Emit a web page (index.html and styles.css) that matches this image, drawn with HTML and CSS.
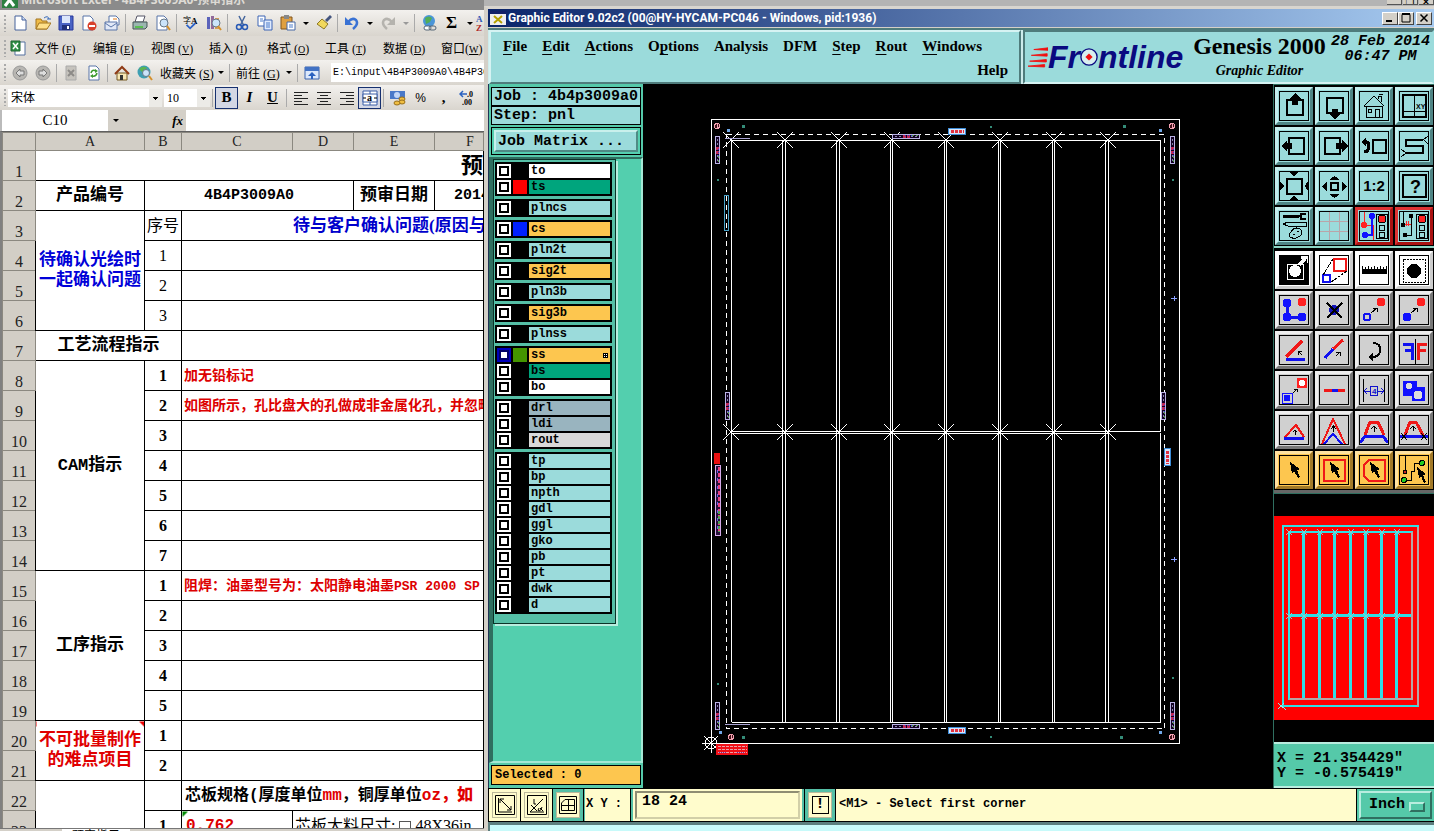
FILE: index.html
```html
<!DOCTYPE html>
<html lang="zh">
<head>
<meta charset="utf-8">
<title>Graphic Editor</title>
<link rel="stylesheet" href="styles.css">
</head>
<body>
<div class="desktop">
<section class="excel">
  <header class="excel-title"><svg class="xl" viewBox="0 0 16 16"><path d="M0 0H16V16H0Z" fill="#2c8040"/><path d="M3 2L12 14M12 2L3 14" stroke="#fff" stroke-width="3"/></svg><span>Microsoft Excel - 4B4P3009A0-预审指示</span></header>
  <div class="bar bar-std"><i class="grip"></i>
    <button class="tb" aria-label="New"><svg viewBox="0 0 16 16"><path d="M3 1H10L14 5V15H3Z" fill="#fff" stroke="#47639b"/><path d="M10 1V5H14" fill="#cfdcf5" stroke="#47639b"/></svg></button>
    <button class="tb" aria-label="Open"><svg viewBox="0 0 16 16"><path d="M1 14V4H6L7 6H12V14Z" fill="#f0bc48" stroke="#a27521"/><path d="M1 14L4 8H16L12 14Z" fill="#ffe08a" stroke="#a27521"/><path d="M9 3Q13 0 14 4M12 4H16" fill="none" stroke="#3568b8"/></svg></button>
    <button class="tb" aria-label="Save"><svg viewBox="0 0 16 16"><path d="M1 1H15V15H1Z" fill="#4a63c4" stroke="#27379b"/><path d="M4 1H12V8H4Z" fill="#dce6fb"/><path d="M4 10H12V15H4Z" fill="#20307a"/><path d="M9 11H11V14H9Z" fill="#fff"/></svg></button>
    <button class="tb" aria-label="Permission"><svg viewBox="0 0 16 16"><path d="M2 1H9L12 4V15H2Z" fill="#fff" stroke="#5874a8"/><circle cx="11" cy="11" r="4.500" fill="#d8402a"/><path d="M8 11H14" stroke="#fff" stroke-width="2"/></svg></button>
    <button class="tb" aria-label="Mail"><svg viewBox="0 0 16 16"><path d="M5 1H12L15 4V10H5Z" fill="#fff" stroke="#5874a8"/><path d="M1 7H13V15H1Z" fill="#e2e9f7" stroke="#5874a8"/><path d="M1 8L7 12L13 8" fill="none" stroke="#5874a8"/><path d="M9 4H13" stroke="#e07818"/></svg></button>
    <i class="sep"></i>
    <button class="tb" aria-label="Print"><svg viewBox="0 0 16 16"><path d="M5 1H13L11 7H3Z" fill="#fff" stroke="#556"/><path d="M1 7H15V12L13 14H1Z" fill="#9bb6b0" stroke="#455"/><path d="M3 11H11V13H3Z" fill="#5abf50"/></svg></button>
    <button class="tb" aria-label="Preview"><svg viewBox="0 0 16 16"><path d="M2 1H9L12 4V15H2Z" fill="#fff" stroke="#5874a8"/><circle cx="9" cy="8" r="4" fill="#cbe4fa" stroke="#678"/><path d="M12 11L15 15" stroke="#d4902c" stroke-width="2"/></svg></button>
    <i class="sep"></i>
    <button class="tb" aria-label="Spelling"><svg viewBox="0 0 18 16"><text x="0" y="8" font-size="9" class="han">字</text><text x="9" y="9" font-size="10" class="sr">A</text><path d="M4 10L8 14L14 8" fill="none" stroke="#2d62c8" stroke-width="2"/></svg></button>
    <button class="tb" aria-label="Research"><svg viewBox="0 0 16 16"><path d="M1 2H4V14H1Z" fill="#5b63bb"/><path d="M5 1H8V14H5Z" fill="#92699b"/><path d="M9 3H13V14H9Z" fill="#d8a054"/><circle cx="10" cy="8" r="4" fill="#cbe4fa" stroke="#678"/><path d="M12 11L15 15" stroke="#d4902c" stroke-width="2"/></svg></button>
    <i class="sep"></i>
    <button class="tb" aria-label="Cut"><svg viewBox="0 0 16 16"><path d="M5 1L10 11M11 1L6 11" stroke="#45669d" stroke-width="1.500"/><circle cx="5" cy="12" r="2.500" fill="none" stroke="#2759b5" stroke-width="1.500"/><circle cx="11" cy="12" r="2.500" fill="none" stroke="#2759b5" stroke-width="1.500"/></svg></button>
    <button class="tb" aria-label="Copy"><svg viewBox="0 0 16 16"><path d="M1 1H8V11H1Z" fill="#fff" stroke="#3c64b4"/><path d="M7 5H15V15H7Z" fill="#dfeafd" stroke="#3c64b4"/><path d="M9 8H13M9 10H13M9 12H13M3 4H6M3 6H6" stroke="#4c7ccb"/></svg></button>
    <button class="tb" aria-label="Paste"><svg viewBox="0 0 16 16"><path d="M1 2H12V14H1Z" fill="#e0a040" stroke="#80551d"/><path d="M4 0H9V4H4Z" fill="#888"/><path d="M7 7H15V15H7Z" fill="#fff" stroke="#4668a6"/><path d="M9 10H13M9 12H13" stroke="#4c7ccb"/></svg></button>
    <button class="drop" aria-label="Paste options"></button>
    <button class="tb" aria-label="Format painter"><svg viewBox="0 0 16 16"><path d="M9 5L14 0L16 2L11 7Z" fill="#44557f"/><path d="M6 4L12 9L8 14L1 9Z" fill="#f1d85c" stroke="#8d7825"/></svg></button>
    <i class="sep"></i>
    <button class="tb" aria-label="Undo"><svg viewBox="0 0 16 16"><path d="M4 7Q8 2 12 5Q15 9 9 14" fill="none" stroke="#3972d4" stroke-width="2.500"/><path d="M1 2V10H9Z" fill="#3972d4"/></svg></button>
    <button class="drop" aria-label="Undo list"></button>
    <button class="tb" aria-label="Redo"><svg viewBox="0 0 16 16"><path d="M12 7Q8 2 4 5Q1 9 7 14" fill="none" stroke="#b5b3ae" stroke-width="2.500"/><path d="M15 2V10H7Z" fill="#b5b3ae"/></svg></button>
    <button class="drop dim" aria-label="Redo list"></button>
    <i class="sep"></i>
    <button class="tb" aria-label="Hyperlink"><svg viewBox="0 0 16 16"><circle cx="8" cy="6" r="6" fill="#4a95d8"/><path d="M4 3Q8 0 11 3L9 7L5 9Z" fill="#53ad57"/><rect x="3" y="11" width="7" height="4" rx="2" fill="#fff" stroke="#567"/><rect x="8" y="11" width="7" height="4" rx="2" fill="none" stroke="#567"/></svg></button>
    <button class="tb sigma">Σ</button><button class="drop" aria-label="Sum options"></button>
    <button class="tb az" aria-label="Sort"><svg viewBox="0 0 16 16"><text x="0" y="7" font-size="9" class="sr" fill="#3159b5">A</text><text x="0" y="16" font-size="9" class="sr" fill="#b02a2a">Z</text></svg></button>
  </div>
  <nav class="bar bar-menu"><i class="grip"></i><svg class="xl" viewBox="0 0 16 16"><path d="M5 2H15V15H5Z" fill="#fff" stroke="#55709f"/><path d="M1 1H10V11H1Z" fill="#319048" stroke="#1e6430"/><path d="M3 3L8 9M8 3L3 9" stroke="#fff" stroke-width="1.500"/></svg>
    <button>文件 (<u>F</u>)</button><button>编辑 (<u>E</u>)</button><button>视图 (<u>V</u>)</button><button>插入 (<u>I</u>)</button><button>格式 (<u>O</u>)</button><button>工具 (<u>T</u>)</button><button>数据 (<u>D</u>)</button><button class="last">窗口(<u>W</u>)</button>
  </nav>
  <div class="bar bar-web"><i class="grip"></i>
    <button class="tb" aria-label="Back"><svg viewBox="0 0 16 16"><circle cx="8" cy="8" r="7" fill="#b8b6b2" stroke="#999"/><path d="M8 4L4 8L8 12V10H12V6H8Z" fill="#ddd" stroke="#777"/></svg></button>
    <button class="tb" aria-label="Forward"><svg viewBox="0 0 16 16"><circle cx="8" cy="8" r="7" fill="#b8b6b2" stroke="#999"/><path d="M8 4L12 8L8 12V10H4V6H8Z" fill="#ddd" stroke="#777"/></svg></button>
    <i class="sep"></i>
    <button class="tb" aria-label="Stop"><svg viewBox="0 0 16 16"><path d="M3 1H13V15H3Z" fill="#c6c3bd" stroke="#aaa"/><path d="M5 5L11 11M11 5L5 11" stroke="#8d8b88" stroke-width="2"/></svg></button>
    <button class="tb" aria-label="Refresh"><svg viewBox="0 0 16 16"><path d="M3 1H10L13 4V15H3Z" fill="#fff" stroke="#5874a8"/><path d="M5 8Q6 4 10 6M11 8Q10 12 6 11" fill="none" stroke="#3c9a2c" stroke-width="1.500"/><path d="M9 4L12 6L9 8ZM7 9L4 11L7 13Z" fill="#3c9a2c"/></svg></button>
    <i class="sep"></i>
    <button class="tb" aria-label="Home"><svg viewBox="0 0 16 16"><path d="M3 8H13V15H3Z" fill="#f7e6b4" stroke="#775a25"/><path d="M1 9L8 2L15 9" fill="none" stroke="#8f3b16" stroke-width="2"/><path d="M6 10H9V15H6Z" fill="#333"/></svg></button>
    <button class="tb" aria-label="Search web"><svg viewBox="0 0 16 16"><circle cx="7" cy="7" r="6.500" fill="#3f9fb3"/><path d="M2 4Q6 0 10 3L6 8Z" fill="#5bb451"/><circle cx="9" cy="8" r="3.500" fill="#cbe4fa" stroke="#678"/><path d="M12 11L15 15" stroke="#d4902c" stroke-width="2"/></svg></button>
    <button class="word">收藏夹 (<u>S</u>)</button><button class="drop" aria-label="Favourites"></button><i class="sep"></i>
    <button class="word go">前往 (<u>G</u>)</button><button class="drop" aria-label="Go list"></button><i class="sep"></i>
    <button class="tb" aria-label="Show web toolbar"><svg viewBox="0 0 16 16"><path d="M1 2H15V14H1Z" fill="#dce8fb" stroke="#3a62ac"/><path d="M1 2H15V6H1Z" fill="#4272c4"/><path d="M8 7L12 11H9V14H7V11H4Z" fill="#2b62c0"/></svg></button>
    <input class="address" aria-label="Address" value="E:\input\4B4P3009A0\4B4P3009A0">
  </div>
  <div class="bar bar-format"><i class="grip"></i>
    <select class="font-name" aria-label="Font"><option>宋体</option></select>
    <select class="font-size" aria-label="Size"><option>10</option></select>
    <i class="sep"></i>
    <button class="tb letter pressed">B</button><button class="tb letter italic">I</button><button class="tb letter under">U</button><i class="sep"></i>
    <button class="tb" aria-label="Left"><svg viewBox="0 0 16 16"><path d="M1 2.500H15M1 5.500H9M1 8.500H15M1 11.500H9M1 14.500H15" stroke="#222"/></svg></button>
    <button class="tb" aria-label="Centre"><svg viewBox="0 0 16 16"><path d="M1 2.500H15M4 5.500H12M1 8.500H15M4 11.500H12M1 14.500H15" stroke="#222"/></svg></button>
    <button class="tb" aria-label="Right"><svg viewBox="0 0 16 16"><path d="M1 2.500H15M7 5.500H15M1 8.500H15M7 11.500H15M1 14.500H15" stroke="#222"/></svg></button>
    <button class="tb pressed" aria-label="Merge"><svg viewBox="0 0 16 16"><path d="M1 1H15V15H1ZM8 1V4M8 12V15" fill="#fff" stroke="#3a5fa8"/><path d="M1 4H15V12H1Z" fill="#fff" stroke="#3a5fa8"/><text x="5" y="11" font-size="10" class="sr">a</text><path d="M1 8H4M12 8H15" stroke="#000"/></svg></button>
    <i class="sep"></i>
    <button class="tb" aria-label="Currency"><svg viewBox="0 0 16 16"><path d="M0 1H15V9H0Z" fill="#4a79c8"/><circle cx="7" cy="5" r="3" fill="#c2d6f7"/><ellipse cx="12" cy="9" rx="3" ry="2" fill="#f0be42" stroke="#99701c"/><ellipse cx="12" cy="12" rx="3" ry="2" fill="#f0be42" stroke="#99701c"/><ellipse cx="7" cy="13" rx="3" ry="2" fill="#f0be42" stroke="#99701c"/></svg></button>
    <button class="tb pct">%</button><button class="tb letter">,</button>
    <button class="tb" aria-label="Increase decimal"><svg viewBox="0 0 16 16"><path d="M1 4H8M4 1L1 4L4 7" fill="none" stroke="#2b62c0" stroke-width="1.500"/><text x="8" y="7" font-size="8" class="sr">.0</text><text x="3" y="15" font-size="8" class="sr">.00</text></svg></button>
  </div>
  <div class="formula"><input class="name-box" aria-label="Name box" value="C10"><button class="drop" aria-label="Names"></button><button class="fx">fx</button><input class="fx-text" aria-label="Formula"></div>
  <div class="sheet"><table>
    <colgroup><col class="c-head"><col class="c-a"><col class="c-b"><col class="c-c"><col class="c-d"><col class="c-e"><col></colgroup>
    <thead><tr><th></th><th>A</th><th>B</th><th>C</th><th>D</th><th>E</th><th><span class="f-col">F</span></th></tr></thead>
    <tbody>
    <tr><th>1</th><td colspan="6" class="heading">预</td></tr>
    <tr><th>2</th><td class="cap">产品编号</td><td colspan="3" class="code">4B4P3009A0</td><td class="cap">预审日期</td><td class="code cut">2014</td></tr>
    <tr><th>3</th><td rowspan="4" class="cap blue">待确认光绘时<br>一起确认问题</td><td>序号</td><td colspan="4" class="ask">待与客户确认问题(原因与</td></tr>
    <tr><th>4</th><td>1</td><td colspan="4"></td></tr>
    <tr><th>5</th><td>2</td><td colspan="4"></td></tr>
    <tr><th>6</th><td>3</td><td colspan="4"></td></tr>
    <tr><th>7</th><td colspan="2" class="cap">工艺流程指示</td><td colspan="4"></td></tr>
    <tr><th>8</th><td rowspan="7" class="cap">CAM指示</td><td class="n">1</td><td colspan="4" class="note">加无铅标记</td></tr>
    <tr><th>9</th><td class="n">2</td><td colspan="4" class="note">如图所示，孔比盘大的孔做成非金属化孔，并忽略</td></tr>
    <tr><th>10</th><td class="n">3</td><td colspan="4"></td></tr>
    <tr><th>11</th><td class="n">4</td><td colspan="4"></td></tr>
    <tr><th>12</th><td class="n">5</td><td colspan="4"></td></tr>
    <tr><th>13</th><td class="n">6</td><td colspan="4"></td></tr>
    <tr><th>14</th><td class="n">7</td><td colspan="4"></td></tr>
    <tr><th>15</th><td rowspan="5" class="cap">工序指示</td><td class="n">1</td><td colspan="4" class="note">阻焊：油墨型号为：太阳静电油墨<span class="mono">PSR 2000 SP</span></td></tr>
    <tr><th>16</th><td class="n">2</td><td colspan="4"></td></tr>
    <tr><th>17</th><td class="n">3</td><td colspan="4"></td></tr>
    <tr><th>18</th><td class="n">4</td><td colspan="4"></td></tr>
    <tr><th>19</th><td class="n">5</td><td colspan="4"></td></tr>
    <tr><th>20</th><td rowspan="2" class="cap red comment">不可批量制作<br>的难点项目</td><td class="n">1</td><td colspan="4"></td></tr>
    <tr><th>21</th><td class="n">2</td><td colspan="4"></td></tr>
    <tr><th>22</th><td rowspan="2"></td><td></td><td colspan="4" class="core">芯板规格(厚度单位<b class="red">mm</b>，铜厚单位<b class="red">oz，如</b></td></tr>
    <tr><th>23</th><td class="n">1</td><td class="value">0.762</td><td colspan="3" class="size"><label>芯板大料尺寸: <input type="checkbox"> 48X36in</label></td></tr>
    </tbody></table></div>
  <div class="tabs"><i></i><button>预审指示</button></div>
</section>

<div class="back-title"><button>_</button><button>❐</button><button>×</button></div>

<section class="editor">
  <header class="title"><svg class="app" viewBox="0 0 16 14"><path d="M0 0H16V14H0Z" fill="#eee"/><path d="M0 0H16V3H0Z" fill="#112068"/><path d="M4 5L12 12M12 5L4 12" stroke="#b4a000" stroke-width="2"/></svg><h1>Graphic Editor 9.02c2 (00@HY-HYCAM-PC046 - Windows, pid:1936)</h1>
    <button aria-label="Minimise"><svg viewBox="0 0 12 10"><path d="M2 8H8" stroke="#000" stroke-width="2"/></svg></button><button aria-label="Maximise"><svg viewBox="0 0 12 10"><path d="M2 1.500H10V9H2Z" fill="none" stroke="#000"/><path d="M2 1H10" stroke="#000" stroke-width="2"/></svg></button><button class="close" aria-label="Close"><svg viewBox="0 0 12 10"><path d="M2.500 1.500L9.500 8.500M9.500 1.500L2.500 8.500" stroke="#000" stroke-width="1.500"/></svg></button></header>
  <div class="top">
    <nav class="menu"><div><button><u>F</u>ile</button><button><u>E</u>dit</button><button><u>A</u>ctions</button><button>O<u>p</u>tions</button><button>Analysis</button><button>DFM</button><button><u>S</u>tep</button><button><u>R</u>out</button><button><u>W</u>indows</button></div><div class="help"><button>Help</button></div></nav>
    <div class="brand">
      <div class="logo"><svg viewBox="0 0 24 26"><path d="M24 2L7 4L24 5ZM23 9L4 11L23 12ZM22 16L2 18L22 19ZM20 22L0 24L20 25Z" fill="#f01010" stroke="#f01010"/></svg><span>Fr</span><svg class="target" viewBox="0 0 20 20"><circle cx="10" cy="10" r="9" fill="#d8efef" stroke="#0a0a80" stroke-width="1.500"/><path d="M10 6L14 10L10 14L6 10Z" fill="#f01010"/></svg><span>ntline</span></div>
      <div class="product"><strong>Genesis 2000</strong><em>Graphic Editor</em></div>
      <div class="clock"><span>28 Feb 2014</span><span>06:47 PM</span></div>
    </div>
  </div>
  <div class="main">
    <aside class="left">
      <div class="job">Job : 4b4p3009a0</div><div class="job">Step: pnl</div>
      <div class="matrix"><button>Job Matrix ...</button></div>
      <div class="well"><div class="layers">
        <ul><li><input type="checkbox" id="l1"><i></i><label for="l1" class="white">to</label></li><li><input type="checkbox" id="l2"><i class="s-red"></i><label for="l2" class="green">ts</label></li></ul>
        <ul><li><input type="checkbox" id="l3"><i></i><label for="l3">plncs</label></li></ul>
        <ul><li><input type="checkbox" id="l4"><i class="s-blue"></i><label for="l4" class="gold">cs</label></li></ul>
        <ul><li><input type="checkbox" id="l5"><i></i><label for="l5">pln2t</label></li></ul>
        <ul><li><input type="checkbox" id="l6"><i></i><label for="l6" class="gold">sig2t</label></li></ul>
        <ul><li><input type="checkbox" id="l7"><i></i><label for="l7">pln3b</label></li></ul>
        <ul><li><input type="checkbox" id="l8"><i></i><label for="l8" class="gold">sig3b</label></li></ul>
        <ul><li><input type="checkbox" id="l9"><i></i><label for="l9">plnss</label></li></ul>
        <ul><li><input type="checkbox" id="l10" checked><i class="s-green"></i><label for="l10" class="gold">ss<svg viewBox="0 0 5 5"><path d="M0 0H5V5H0Z"/><path d="M1 1H2V2H1ZM3 1H4V2H3ZM1 3H2V4H1ZM3 3H4V4H3Z" fill="#fff"/></svg></label></li><li><input type="checkbox" id="l11"><i></i><label for="l11" class="green">bs</label></li><li><input type="checkbox" id="l12"><i></i><label for="l12" class="white">bo</label></li></ul>
        <ul><li><input type="checkbox" id="l13"><i></i><label for="l13" class="slate">drl</label></li><li><input type="checkbox" id="l14"><i></i><label for="l14" class="slate">ldi</label></li><li><input type="checkbox" id="l15"><i></i><label for="l15" class="silver">rout</label></li></ul>
        <ul><li><input type="checkbox" id="l16"><i></i><label for="l16">tp</label></li><li><input type="checkbox" id="l17"><i></i><label for="l17">bp</label></li><li><input type="checkbox" id="l18"><i></i><label for="l18">npth</label></li><li><input type="checkbox" id="l19"><i></i><label for="l19">gdl</label></li><li><input type="checkbox" id="l20"><i></i><label for="l20">ggl</label></li><li><input type="checkbox" id="l21"><i></i><label for="l21">gko</label></li><li><input type="checkbox" id="l22"><i></i><label for="l22">pb</label></li><li><input type="checkbox" id="l23"><i></i><label for="l23">pt</label></li><li><input type="checkbox" id="l24"><i></i><label for="l24">dwk</label></li><li><input type="checkbox" id="l25"><i></i><label for="l25">d</label></li></ul>
      </div></div>
      <div class="selected">Selected : 0</div>
    </aside>
    <div class="canvas"><svg viewBox="643 84 630 705" preserveAspectRatio="xMidYMin meet" shape-rendering="crispEdges">
      <defs>
        <g id="x"><path d="M-8 -8L8 8M8 -8L-8 8" stroke="#fff"/></g>
        <g id="leg"><rect x=".5" y=".5" width="4" height="27" fill="#102" stroke="#bbb4e6"/><path d="M2.500 3V25" stroke="#88a" stroke-dasharray="2 2"/><path d="M2.500 11V19" stroke="#c02858" stroke-width="3" stroke-dasharray="3 1"/><path d="M3.500 13V22" stroke="#2838d0" stroke-dasharray="1 2"/><path d="M3.500 20V26" stroke="#4a9040" stroke-dasharray="2 2"/></g>
        <g id="flag"><rect x=".5" y=".5" width="17" height="6" fill="#d8e6fb" stroke="#3c8cd8"/><path d="M3 3.500H16" stroke="#e03040" stroke-width="3" stroke-dasharray="3 1"/></g>
        <g id="hole"><circle r="2.500" fill="#401018" stroke="#f0a0b0"/><path d="M0 -3V3" stroke="#f0a0b0"/></g>
      </defs>
      <g fill="none" stroke="#fff"><path d="M711.500 119.500H1179.500V743.500H711.500Z"/><path d="M726.500 134.500H1164.500V728.500H726.500Z" stroke-dasharray="5 4"/>
      <path d="M731.500 140.500H1160.500M731.500 431.500H1160.500M731.500 433.500H1108.500M731.500 722.500H1160.500M731.500 140V722M1160.500 140V431M1160.500 433V722"/>
      <path d="M782.500 140V722M785.500 140V722M836.500 140V722M839.500 140V722M890.500 140V722M892.500 140V722M944.500 140V722M946.500 140V722M998.500 140V722M1000.500 140V722M1052.500 140V722M1054.500 140V722M1105.500 140V722M1108.500 140V722"/></g>
      <use href="#x" x="731" y="140"/><use href="#x" x="785" y="140"/><use href="#x" x="839" y="140"/><use href="#x" x="892" y="140"/><use href="#x" x="946" y="140"/><use href="#x" x="1000" y="140"/><use href="#x" x="1054" y="140"/><use href="#x" x="1108" y="140"/>
      <use href="#x" x="731" y="432"/><use href="#x" x="785" y="432"/><use href="#x" x="839" y="432"/><use href="#x" x="892" y="432"/><use href="#x" x="946" y="432"/><use href="#x" x="1000" y="432"/><use href="#x" x="1054" y="432"/><use href="#x" x="1108" y="432"/>
      <use href="#leg" x="715" y="136"/><use href="#leg" x="1170" y="136"/><use href="#leg" x="715" y="702"/><use href="#leg" x="1170" y="702"/><use href="#leg" x="725" y="392"/><use href="#leg" x="1161" y="392"/>
      <use href="#leg" transform="translate(892 139) rotate(-90)"/><use href="#leg" transform="translate(892 729) rotate(-90)"/>
      <use href="#flag" x="948" y="128"/><use href="#flag" x="948" y="727"/><use href="#flag" transform="translate(1171 448) rotate(90)"/>
      <path d="M724.500 195.500H728.500V230.500H724.500Z" fill="none" stroke="#49a2c8"/><path d="M714 453H720V464H714Z" fill="#e81010"/><path d="M715.500 465.500H720.500V535H715.500Z" fill="#26103a" stroke="#d4a8e8"/><path d="M718.500 467V533" stroke="#e64080" stroke-width="2" stroke-dasharray="4 2"/><path d="M717.500 470V530" stroke="#6860e8" stroke-dasharray="3 5"/><path d="M718.500 511V532" stroke="#51a052" stroke-width="2" stroke-dasharray="3 2"/>
      <use href="#hole" x="717" y="126"/><use href="#hole" x="1172" y="126"/><use href="#hole" x="1172" y="737"/><use href="#hole" x="731" y="737"/>
      <path d="M727 129H730V132H727ZM1159 129H1162V132H1159ZM1159 731H1162V734H1159ZM719 731H722V734H719Z" fill="#70a8e8"/><path d="M742 125H745V128H742ZM1123 125H1126V128H1123ZM742 736H745V739H742ZM1120 736H1123V739H1120ZM717 179H719V181H717ZM1172 179H1174V181H1172ZM717 683H719V685H717ZM1172 677H1174V679H1172ZM990 126H992V128H990ZM990 736H992V738H990Z" fill="#348c78"/>
      <path d="M1171 298.500H1177M1174.500 296V301M1171 559.500H1177M1174.500 557V562" stroke="#8aa0ff"/><path d="M725 138.500H750M725 724.500H750" stroke="#a9a3d4"/>
      <g stroke="#fff" fill="none"><circle cx="711" cy="743" r="6"/><path d="M702 743.500H720M711.500 734V753M704 736L718 750M718 736L704 750"/></g>
      <path d="M716 744H748V755H716Z" fill="#f01018"/><path d="M718 746.500H747M718 749.500H747M718 752.500H747" stroke="#e8a0a8" stroke-dasharray="3 1"/><path d="M719 752.500H726M737 752.500H744" stroke="#7030a0" stroke-dasharray="1 1"/>
    </svg></div>
    <aside class="right">
      <div class="tools cyan">
        <button aria-label="Pan up"><svg viewBox="5 5 28 28"><path class="k2" d="M12 13H28V28H12Z"/><path d="M20 6L14 12H17V18H23V12H26Z"/></svg></button>
        <button aria-label="Pan down"><svg viewBox="5 5 28 28"><path class="k2" d="M12 11H28V26H12Z"/><path d="M20 32L14 27H17V22H23V27H26Z"/></svg></button>
        <button aria-label="Home"><svg viewBox="5 5 28 28"><path class="k1" d="M9 19L19 9L29 19M9 19H28M11 19V30H27V19M23 12V9H26V15M20 30V22H24V30M13 22H16V25H13ZM24 7H28"/></svg></button>
        <button aria-label="Area XY"><svg viewBox="5 5 28 28"><path class="k2" d="M8 8H31V30H8Z"/><path class="k1" d="M19.500 8V30M8 24.500H31"/><text x="21" y="22" font-size="7">XY</text></svg></button>
        <button aria-label="Pan left"><svg viewBox="5 5 28 28"><path class="k2" d="M14 11H29V27H14Z"/><path d="M6 19L12 13V16H17V22H12V25Z"/></svg></button>
        <button aria-label="Pan right"><svg viewBox="5 5 28 28"><path class="k2" d="M10 11H25V27H10Z"/><path d="M33 19L27 13V16H21V22H27V25Z"/></svg></button>
        <button aria-label="Previous view"><svg viewBox="5 5 28 28"><path class="k2" d="M18 13H31V26H18Z"/><path class="k3" d="M9 15Q14 14 14 19Q14 25 9 25"/><path d="M6 15L11 10V19Z"/></svg></button>
        <button aria-label="Serpentine"><svg viewBox="5 5 28 28"><path class="k2" d="M28 13H11V19H28V26H11"/><path class="k1" d="M28 13L33 9M29 13L33 17M11 26L6 22M11 26L6 30"/></svg></button>
        <button aria-label="Zoom in"><svg viewBox="5 5 28 28"><path class="k2" d="M12 12H27V27H12Z"/><path d="M14 5H24L19 9ZM14 33H24L19 29ZM5 14V24L9 19ZM33 14V24L30 19Z"/></svg></button>
        <button aria-label="Zoom out"><svg viewBox="5 5 28 28"><path class="k2" d="M16 16H23V23H16Z"/><path d="M14 13H25L19.500 9ZM14 27H25L19.500 31ZM12 14V25L7 19.500ZM27 14V25L32 19.500Z"/></svg></button>
        <button class="cap-text"><span>1:2</span></button>
        <button aria-label="Help"><svg viewBox="5 5 28 28"><path class="k2" d="M8 8H31V30H8Z"/><text x="15" y="26" font-size="18">?</text></svg></button>
        <button aria-label="Options"><svg viewBox="5 5 28 28"><path class="k2" d="M8 9H26M8 10H24"/><path class="k2" d="M31 7H26V12H31"/><path class="k1" d="M8 17L13 15H31V19H13ZM16 25Q19 19 25 22Q29 25 25 29Q20 33 15 30Q13 28 16 25M18 27H20M22 24H24"/></svg></button>
        <button aria-label="Grid"><svg viewBox="5 5 28 28"><path d="M14.500 5V33M24.500 5V33M5 14.500H33M5 24.500H33" stroke="#b9a5a9" fill="none"/></svg></button>
        <button class="alert" aria-label="Net signal"><svg viewBox="5 5 28 28"><path d="M9.500 5V17" stroke="#f22" fill="none"/><path d="M9 18H18V33" stroke="#f22" fill="none"/><path d="M17 9V28H11" stroke="#11f" stroke-width="2" fill="none"/><circle cx="17" cy="9" r="3" fill="#11f"/><circle cx="10" cy="28" r="3" fill="#11f"/><circle cx="9" cy="18" r="3" fill="#f22"/><path class="k1" d="M21.500 7.500H32.500V31.500H21.500Z"/><circle cx="27" cy="12" r="4" fill="#f22" stroke="#000"/><circle class="k1" cx="27" cy="21" r="3"/><circle class="k1" cx="27" cy="28" r="3"/></svg></button>
        <button class="alert" aria-label="Short signal"><svg viewBox="5 5 28 28"><path class="k1" d="M8.500 5V17M16.500 9V20M16.500 20V28H10"/><path d="M10 17H16M11 14V19M13 14V19" stroke="#f22"/><circle cx="16" cy="9" r="2.500"/><circle cx="10" cy="28" r="2.500"/><circle cx="8" cy="18" r="2.500"/><path class="k1" d="M21.500 7.500H32.500V31.500H21.500Z"/><circle cx="27" cy="12" r="4" fill="#f22" stroke="#000"/><circle class="k1" cx="27" cy="21" r="3"/><circle class="k1" cx="27" cy="28" r="3"/></svg></button>
      </div>
      <div class="tools gray">
        <button class="w" aria-label="Zoom window"><svg viewBox="5 5 28 28"><path d="M5 5H33V33H5Z"/><path d="M12 13H28V28H12Z" stroke="#fff" fill="none"/><circle cx="20" cy="20" r="6" fill="#fff"/><path d="M24 14L30 8M26 6H33V12" stroke="#fff" stroke-width="3" fill="none"/></svg></button>
        <button class="w" aria-label="Scale"><svg viewBox="5 5 28 28"><path class="r2" d="M19 8H31V20H19Z"/><path class="b2" d="M8 24H15V31H8Z"/><path class="k1" d="M8 24L18 8M16 31L32 20" stroke-dasharray="3 1"/></svg></button>
        <button class="w" aria-label="Ruler"><svg viewBox="5 5 28 28"><path d="M7 18H32V23H7Z"/><path d="M7.500 15V18M10.500 16V18M13.500 15V18M16.500 16V18M19.500 15V18M22.500 16V18M25.500 15V18M28.500 16V18M31.500 15V18" stroke="#000"/></svg></button>
        <button class="w" aria-label="Select feature"><svg viewBox="5 5 28 28"><path class="k1" d="M8.500 8.500H30.500V31H8.500Z" stroke-dasharray="2 1"/><circle cx="19" cy="20" r="7"/></svg></button>
        <button aria-label="Add"><svg viewBox="5 5 28 28"><path class="b3" d="M12 12V26H28"/><circle cx="12" cy="12" r="4.500" fill="#11f"/><circle cx="12" cy="26" r="4.500" fill="#11f"/><circle cx="27" cy="26" r="4.500" fill="#11f"/><circle cx="27" cy="11" r="4.500" fill="#f22"/></svg></button>
        <button aria-label="Delete"><svg viewBox="5 5 28 28"><circle cx="19" cy="19" r="5" fill="#11b"/><path class="k2" d="M12 12L27 27M27 12L12 27"/></svg></button>
        <button aria-label="Move"><svg viewBox="5 5 28 28"><circle class="b2" cx="12" cy="26" r="3.500"/><circle cx="26" cy="11" r="4.500" fill="#f22"/><path class="k1" d="M16 22L22 17M18 17H22V21"/></svg></button>
        <button aria-label="Copy"><svg viewBox="5 5 28 28"><circle cx="12" cy="26" r="4.500" fill="#11f"/><circle cx="26" cy="11" r="4.500" fill="#f22"/><path class="k1" d="M16 22L22 17M18 17H22V21"/></svg></button>
        <button aria-label="Rotate line"><svg viewBox="5 5 28 28"><path class="r3" d="M11 26L27 10"/><path class="b3" d="M11 28H30"/><path class="k1" d="M27 24L23 20M23 24V20H27"/></svg></button>
        <button aria-label="Extend"><svg viewBox="5 5 28 28"><path class="r3" d="M18 18L28 9"/><path class="b3" d="M10 27L18 18"/><path class="k1" d="M21 25L25 21M21 21H25V25"/></svg></button>
        <button aria-label="Rotate"><svg viewBox="5 5 28 28"><path class="k2" d="M18 12Q26 12 25 20Q25 26 16 26"/><path d="M13 26L18 22V30Z"/></svg></button>
        <button aria-label="Mirror"><svg viewBox="5 5 28 28"><path class="b3" d="M8 13H17V29M10 19H17"/><path class="r3" d="M32 13H23V29M31 19H23"/><path class="k1" d="M20 8V33"/></svg></button>
        <button aria-label="Resize"><svg viewBox="5 5 28 28"><path d="M22 7H32V17H22Z" fill="#f22"/><circle cx="27" cy="12" r="3" fill="#fff"/><path d="M7.500 22.500H17V32H7.500Z" fill="none" stroke="#11f"/><circle cx="12" cy="27" r="3.500" fill="#11f"/><path class="k1" d="M18 22L22 18M19 18H22V21"/></svg></button>
        <button aria-label="Trim"><svg viewBox="5 5 28 28"><path class="r3" d="M9 19H30"/><path class="b3" d="M17 19H23"/></svg></button>
        <button aria-label="Spacing"><svg viewBox="5 5 28 28"><path class="k1" d="M8.500 8V31M29.500 8V31"/><path d="M10 20H15M23 20H28M12 17L9 20L12 23M26 17L29 20L26 23M15.500 15.500H22.500V24.500H15.500Z" fill="none" stroke="#11c"/><text x="17" y="23" font-size="8" fill="#11c">4</text></svg></button>
        <button aria-label="Combine"><svg viewBox="5 5 28 28"><path d="M8 10H22V16H30V30H17V25H8Z" fill="#11f"/><circle cx="14" cy="15" r="3" fill="#ddd"/><circle cx="23" cy="24" r="4.500" fill="#ddd"/></svg></button>
        <button aria-label="Triangle"><svg viewBox="5 5 28 28"><path class="r2" d="M10 26L21 14L29 26"/><path class="b3" d="M9 27H29"/><path class="k1" d="M20 24V19M18 21L20 19L22 21"/></svg></button>
        <button aria-label="Peak"><svg viewBox="5 5 28 28"><path class="r2" d="M7 33L18 8L30 33"/><path class="b2" d="M9 33L18 23L27 33"/><path class="k1" d="M18.500 21V15M16 18L18.500 15L21 18"/></svg></button>
        <button aria-label="Plateau"><svg viewBox="5 5 28 28"><path class="r3" d="M10 24L15 11H23L29 24"/><path class="b3" d="M5 32L10 25H28L33 32"/><path class="k1" d="M19 21V15M16 18L19 15L22 18"/></svg></button>
        <button aria-label="Cut plateau"><svg viewBox="5 5 28 28"><path class="r3" d="M10 24L15 11H21L28 24"/><path class="b3" d="M5 25H33"/><path class="k1" d="M18 20V15M15 18L18 15L21 18M6 22L12 29M12 22L6 29M26 22L32 29M32 22L26 29"/></svg></button>
        <button class="o" aria-label="Select"><svg viewBox="5 5 28 28"><path d="M15 11L17 23L19 20L23 27L25 26L22 19L25 18Z"/></svg></button>
        <button class="o" aria-label="Select in frame"><svg viewBox="5 5 28 28"><path class="r2" d="M9 9H30V30H9Z"/><path d="M15 11L17 23L19 20L23 27L25 26L22 19L25 18Z"/></svg></button>
        <button class="o" aria-label="Select in polygon"><svg viewBox="5 5 28 28"><path class="r2" d="M14 9H30V30H14L9 25V14Z"/><path d="M15 11L17 23L19 20L23 27L25 26L22 19L25 18Z"/></svg></button>
        <button class="o" aria-label="Select net"><svg viewBox="5 5 28 28"><path class="k1" d="M10.500 5V20M10 29H16V20H19V12H27"/><circle cx="27" cy="12" r="2.500" fill="#2c2" stroke="#000"/><circle cx="10" cy="21" r="2" fill="#c22" stroke="#000"/><circle cx="9" cy="29" r="2.500" fill="#2c2" stroke="#000"/><path d="M22 16L24 27L26 25L29 32L31 31L28 24L31 23Z"/></svg></button>
      </div>
      <div class="mini"><svg viewBox="0 0 160 204" shape-rendering="crispEdges"><path d="M0 0H160V204H0Z" fill="#f00"/><g fill="none" stroke="#30dfe5" stroke-width="2"><path d="M9 10H144V190H9Z"/><path d="M15 16H138V183H15Z"/><path stroke-width="3" d="M29.500 16V183M45.500 16V183M60.500 16V183M76.500 16V183M91.500 16V183M107.500 16V183M122.500 16V183M15 99.500H138"/></g><path d="M15 183H138V16M144 190V11" fill="none" stroke="#b5a5a5" stroke-width="2"/><path d="M10 187L4 193M4 187L12 194" stroke="#8ee"/><path d="M12 13L18 19M18 13L12 19M27 13L33 19M33 13L27 19M43 13L49 19M49 13L43 19M58 13L64 19M64 13L58 19M74 13L80 19M80 13L74 19M89 13L95 19M95 13L89 19M105 13L111 19M111 13L105 19M120 13L126 19M126 13L120 19M12 97L18 103M18 97L12 103M27 97L33 103M33 97L27 103M43 97L49 103M49 97L43 103M58 97L64 103M64 97L58 103M74 97L80 103M80 97L74 103M89 97L95 103M95 97L89 103M105 97L111 103M111 97L105 103M120 97L126 103M126 97L120 103" stroke="#8cc"/></svg></div>
      <div class="coords"><div>X = 21.354429"</div><div>Y = -0.575419"</div></div>
    </aside>
  </div>
  <footer class="status">
    <button aria-label="Stretch"><svg viewBox="0 0 20 20"><path class="k1" d="M.5 .5H19.500V19.500H.5ZM3.500 3V17H17M5 4L16 15M5 8V4H9M16 11V15H12"/></svg></button>
    <button aria-label="Angle"><svg viewBox="0 0 20 20"><path class="k1" d="M.5 .5H19.500V19.500H.5ZM3 17H17M3 17L16 4M7 4V9H9M4 10L10 16M12 13Q10 16 12 16Q14 16 15 12M13 13L16 16"/></svg></button>
    <button class="on" aria-label="Snap"><svg viewBox="0 0 18 18"><path class="k1" d="M.5 .5H17.500V17.500H.5ZM6 3.500H15.500V14.500H2.500V7ZM9.500 3V15M2 9.500H16"/></svg></button>
    <label class="xy" for="xy">X Y :</label><div class="entry"><input id="xy" value="18 24"></div>
    <button class="on bang"><span>!</span></button>
    <output class="message">&lt;M1&gt; - Select first corner</output>
    <div class="unit"><select aria-label="Unit"><option>Inch</option></select></div>
  </footer>
  <div class="under-strip"></div>
</section>
</div>
</body>
</html>
```
FILE: styles.css
```css
* { box-sizing: border-box; }
body { margin: 0; overflow: hidden; font-family: "Liberation Serif", "Noto Sans CJK SC", serif; color: #000; }
button, input, select { font: inherit; color: inherit; margin: 0; padding: 0; border: 0; border-radius: 0; background: none; }
button { white-space: nowrap; }
h1, ul { margin: 0; padding: 0; list-style: none; }
svg { display: block; flex: none; }
.desktop { position: relative; height: 100vh; background: #b4b4b4; overflow: hidden; }

/* spreadsheet window */
.excel { width: 484px; height: 100%; display: flex; flex-direction: column; background: #d4d0c8; overflow: hidden; }
.excel-title { flex: none; height: 10px; background: #8b8b8b; color: #dedbd5; display: flex; align-items: flex-end; gap: 3px; padding: 0 0 2px 2px; font: bold 12px/16px "Noto Sans", "Noto Sans CJK SC", sans-serif; white-space: nowrap; overflow: hidden; }
.xl { width: 16px; height: 16px; }
.bar { flex: none; height: 25px; display: flex; align-items: center; padding-left: 4px; background: linear-gradient(#f3f1ee, #d9d5ce); font-size: 12px; white-space: nowrap; overflow: hidden; }
.bar-std { height: 26px; }
.bar-menu { height: 24px; background: #dedad4; }
.bar > * { flex: none; }
.grip { width: 4px; height: 17px; background: repeating-linear-gradient(#aaa 0 2px, transparent 2px 4px) left / 2px 100% no-repeat; }
.sep { width: 5px; height: 18px; background: linear-gradient(#aaa, #aaa) center / 1px 100% no-repeat; }
.tb { width: 23px; height: 22px; display: flex; align-items: center; justify-content: center; }
.tb svg { width: 16px; height: 16px; }
.tb.az { width: 8px; justify-content: flex-start; }
.tb.pressed { border: 1px solid #16306f; background: #d3d7e4; }
.han { font-family: "Noto Sans CJK SC", sans-serif; }
.sr { font-family: "Liberation Serif", serif; font-weight: bold; }
.drop { width: 13px; height: 20px; display: flex; align-items: center; justify-content: center; }
.drop::before { content: ""; border: 3px solid transparent; border-top-color: #000; border-bottom: 0; }
.drop.dim::before { border-top-color: #999; }
.sigma { font-weight: bold; font-size: 17px; }
.bar-menu .xl { margin: 0 9px 0 2px; }
.bar-menu button { width: 58px; text-align: left; font-size: 12px; }
.bar-menu .last { width: 43px; }
.bar-menu u { font-size: 10px; }
.word { width: 58px; font-size: 12px; text-align: left; padding-left: 4px; }
.word.go { width: 50px; }
.address { flex: 1; min-width: 0; height: 19px; margin-left: 8px; padding-left: 2px; background: #fff; font-family: "Liberation Mono", monospace; font-size: 10px; }
.bar .address { flex: 1; }
.bar select { appearance: none; height: 18px; background: linear-gradient(#000, #000) right 4px top 8px / 5px 1px no-repeat, linear-gradient(#000, #000) right 5px top 9px / 3px 1px no-repeat, linear-gradient(#000, #000) right 6px top 10px / 1px 1px no-repeat, linear-gradient(#ecebe7, #ecebe7) right / 13px 100% no-repeat, #fff; padding-left: 3px; }
.font-name { width: 154px; font-size: 12px; }
.font-size { width: 46px; margin-left: 2px; }
.letter { font-weight: bold; font-size: 15px; }
.italic { font-style: italic; }
.under { text-decoration: underline; }
.pct { font: 12px "Liberation Sans", sans-serif; }
.formula { flex: none; height: 21px; display: flex; border-left: 2px solid #bbb; }
.name-box { width: 106px; background: #fff; text-align: center; font-size: 15px; }
.formula .drop { width: 16px; }
.fx { width: 62px; text-align: right; padding-right: 3px; font: italic bold 13px "Liberation Serif", serif; }
.fx-text { flex: 1; min-width: 0; background: #fff; }
.sheet { flex: 1; min-height: 0; overflow: hidden; border-left: 2px solid #808080; border-top: 1px solid #606060; background: #fff; }
.sheet table { width: 482px; table-layout: fixed; border-collapse: collapse; }
.c-head { width: 33px; } .c-a { width: 109px; } .c-b { width: 37px; } .c-c { width: 111px; } .c-d { width: 61px; } .c-e { width: 81px; }
.sheet tr { height: 30px; }
.sheet thead tr { height: 18px; }
.sheet th { background: #d2cec6; font-size: 14px; font-weight: normal; line-height: 16px; padding: 0; border: 1px solid #8b8880; color: #222; }
.sheet tbody th { vertical-align: bottom; font-size: 16px; }
.sheet td { border: 1px solid #000; padding: 0; text-align: center; font-size: 16px; line-height: 20px; white-space: nowrap; overflow: hidden; }
.f-col { padding-left: 22px; }
.sheet .heading { text-align: right; font-size: 22px; font-weight: bold; line-height: 24px; }
.sheet .cap { font-weight: bold; font-family: "Liberation Mono", "Noto Sans CJK SC", monospace; font-size: 17px; }
.sheet td.code { font: bold 15px "Liberation Mono", monospace; }
.sheet td.cut { text-align: left; padding-left: 19px; }
.sheet .n { font-weight: bold; }
.sheet .ask { text-align: left; padding-left: 111px; color: #00c; font-weight: bold; font-size: 17px; }
.sheet .note { text-align: left; padding-left: 2px; color: #d00; font-weight: bold; font-size: 14px; }
.mono { font: bold 13px "Liberation Mono", monospace; }
.blue { color: #0000d8; }
.red { color: #e00000; }
.comment { background: linear-gradient(225deg, #e00 4px, transparent 4px); }
.sheet .core { text-align: left; padding-left: 3px; font: bold 16px/20px "Liberation Mono", "Noto Sans CJK SC", monospace; }
.sheet .value { text-align: left; padding-left: 4px; color: #d00; font-weight: bold; font-family: "Liberation Mono", monospace; background: linear-gradient(135deg, #080 4px, transparent 4px); }
.sheet .size { text-align: left; padding-left: 2px; }
.size input { width: 12px; height: 12px; appearance: none; border: 1px solid #555; vertical-align: -2px; }
.tabs { flex: none; height: 3px; display: flex; overflow: hidden; background: #d4d0c8; border-top: 1px solid #777; }
.tabs i { width: 62px; }
.tabs button { height: 14px; background: #fff; font-size: 12px; line-height: 14px; padding: 0 10px; }
.back-title { position: absolute; top: 0; right: 0; height: 5px; display: flex; gap: 1px; overflow: hidden; }
.back-title button { width: 15px; height: 5px; background: #d4d0c8; font: bold 10px/2px "DejaVu Sans", sans-serif; border-right: 1px solid #555; border-bottom: 1px solid #555; overflow: hidden; }

/* editor window */
.editor { position: absolute; top: 6px; right: 0; bottom: 0; left: 484px; display: flex; flex-direction: column; border-left: 4px solid #d4d0c8; border-top: 3px solid #d8d5cf; background: #000; font-weight: bold; }
.title { flex: none; height: 19px; display: flex; align-items: center; padding: 0 2px; background: linear-gradient(90deg, #0a246a, #a6caf0); color: #fff; border-bottom: 1px solid #d4d0c8; }
.app { width: 16px; height: 14px; }
.title h1 { flex: 1; font: bold 12px/16px Roboto, sans-serif; padding-left: 2px; white-space: nowrap; }
.title button { width: 16px; height: 13px; background: #d4d0c8; border: 1px solid; border-color: #fff #444 #444 #fff; display: flex; align-items: center; justify-content: center; }
.title button svg { width: 12px; height: 10px; }
.title .close { margin-left: 2px; }
.top { flex: none; height: 56px; display: flex; gap: 2px; background: #cdecec; border-top: 2px solid #4f7c7c; padding-left: 1px; }
.menu { flex: 532 1 532px; background: #9bdbdb; border: 2px solid; border-color: #d6f3f3 #4f7c7c #4f7c7c #d6f3f3; padding: 5px 11px 0 12px; font-size: 15px; line-height: 18px; }
.menu div { display: flex; gap: 15px; }
.menu .help { justify-content: flex-end; padding-top: 6px; }
.menu u { text-underline-offset: 3px; }
.brand { flex: 411 1 411px; min-width: 0; display: flex; background: #9bdbdb; border: 2px solid; border-color: #4f7c7c #9bdbdb #d6f3f3 #4f7c7c; padding-left: 3px; }
.logo { width: 162px; display: flex; align-items: center; color: #0a0a80; font: italic bold 32px/32px "Liberation Sans", sans-serif; }
.logo svg { width: 20px; height: 24px; }
.logo .target { width: 18px; height: 18px; }
.product { flex: 1; display: flex; flex-direction: column; align-items: center; white-space: nowrap; }
.product strong { font-size: 24px; line-height: 28px; }
.product em { font-size: 14px; line-height: 22px; }
.clock { width: 103px; display: flex; flex-direction: column; align-items: center; font: italic bold 15px/15px "Liberation Mono", monospace; padding-top: 2px; white-space: nowrap; }
.main { flex: 1; min-height: 0; display: flex; }
.left { width: 155px; flex: none; display: flex; flex-direction: column; background: #55c9a9; border-left: 1px solid #235; font-family: "Liberation Mono", monospace; padding-top: 3px; }
.job { height: 19px; margin: 0 2px; background: #9bdbdb; border: 1px solid #000; padding-left: 2px; font-size: 15px; line-height: 17px; white-space: nowrap; }
.matrix { height: 28px; margin: 2px; border: 1px solid #000; padding: 2px; background: #55cfb0; }
.matrix button { width: 100%; height: 22px; text-align: left; padding-left: 2px; font-size: 15px; background: #9bdbdb; border: 2px solid; border-color: #c9f0ec #4f8b85 #4f8b85 #c9f0ec; }
.well { flex: 1; min-height: 0; background: #53cfae; border: solid #a5e8d5; border-width: 2px 2px 2px 4px; border-top-color: #2f6f60; border-left-color: #2f6f60; }
.layers { width: 123px; border: 1px solid #0a3328; box-shadow: 2px 2px #b9eddf; background: #55bfa6; padding: 2px 3px 9px 1px; display: flex; flex-direction: column; gap: 3px; }
.layers ul { background: #000; padding: 1px 2px; }
.layers li { height: 16px; display: grid; grid-template-columns: 14px 14px 1fr; gap: 2px; padding: 1px 0; }
.layers input { appearance: none; width: 14px; height: 14px; background: #fff; border: 2px solid #fff; box-shadow: inset 0 0 0 2px #000; }
.layers input:checked { border-color: #00b; box-shadow: inset 0 0 0 2px #006; }
.layers label { background: #9bdbdb; padding: 0 2px; font-size: 12px; line-height: 13px; display: flex; align-items: center; justify-content: space-between; }
.layers label svg { width: 5px; height: 5px; }
.layers .white { background: #fff; } .layers .green { background: #00a57d; } .layers .gold { background: #fdc64f; } .layers .slate { background: #99b4bf; } .layers .silver { background: #d9d9d9; }
.s-red { background: #f00; } .s-blue { background: #0020ff; } .s-green { background: #449500; }
.selected { height: 20px; margin: 2px 2px 3px; background: #fdc64f; border: 1px solid #000; padding-left: 3px; font-size: 12px; line-height: 18px; }
.canvas { flex: 1; min-width: 0; background: #000; overflow: hidden; }
.canvas svg { width: 100%; aspect-ratio: 630 / 705; }
.right { width: 161px; flex: none; display: flex; flex-direction: column; background: #000; border-left: 1px solid #2f6f60; }
.tools { display: grid; grid-template-columns: repeat(4, 38px); gap: 2px; padding: 3px 0 0 1px; overflow: hidden; }
.tools.cyan { border-top: 1px solid #2f6f60; padding-top: 2px; padding-bottom: 1px; border-bottom: 2px solid #8cd5c5; }
.tools.gray { padding-bottom: 1px; border-bottom: 3px solid #666; padding-top: 3px; }
.tools button { width: 38px; height: 38px; border: 3px solid; border-color: #c4eeee #4f8585 #4f8585 #c4eeee; background: #9bdbdb; display: flex; align-items: center; justify-content: center; }
.tools svg { width: 30px; height: 30px; border: 1px solid #000; shape-rendering: crispEdges; }
.tools .cap-text span { width: 30px; height: 30px; border: 1px solid #000; font: bold 15px/28px "Liberation Sans", sans-serif; }
.tools .alert { border-color: #d33 #a11 #a11 #d33; }
.tools.gray button { border-color: #eee #777 #777 #eee; background: #d0d0d0; }
.tools.gray .w { background: #fff; border-color: #fff #ccc #ccc #fff; }
.tools.gray .o { background: #fdc64f; border-color: #ffe2a0 #a37a28 #a37a28 #ffe2a0; }
.k1 { fill: none; stroke: #000; stroke-width: 1; }
.k2 { fill: none; stroke: #000; stroke-width: 2; }
.k3 { fill: none; stroke: #000; stroke-width: 3; }
.r2 { fill: none; stroke: #f01818; stroke-width: 2; }
.r3 { fill: none; stroke: #f01818; stroke-width: 3; }
.b2 { fill: none; stroke: #1111f0; stroke-width: 2; }
.b3 { fill: none; stroke: #1111f0; stroke-width: 3; }
.tools text { font-family: "Liberation Sans", sans-serif; font-weight: bold; }
.mini { flex: 1; min-height: 0; display: flex; align-items: center; border-top: 1px solid #2f6f60; }
.mini svg { width: 160px; height: 204px; }
.coords { height: 46px; flex: none; background: #55c9a9; border-top: 2px solid #b9eddf; border-bottom: 2px solid #b9eddf; padding: 7px 0 0 3px; font: bold 15px/15px "Liberation Mono", monospace; white-space: nowrap; }
.status { flex: none; height: 34px; display: flex; gap: 1px; padding: 1px 0 1px 1px; font: bold 12px/16px "Liberation Mono", monospace; }
.status > button { width: 31px; background: #fffccc; display: flex; align-items: center; justify-content: center; border: 2px solid #fffccc; outline: 1px solid #bbb89a; outline-offset: -4px; }
.status > button svg { width: 20px; height: 20px; }
.status .on { width: 30px; border: 3px solid #55bfa6; }
.status .on svg { width: 18px; height: 18px; }
.bang span { width: 17px; height: 18px; border: 1px solid #000; font-size: 15px; line-height: 16px; }
.xy { width: 46px; background: #fffccc; padding-left: 1px; line-height: 31px; border-left: 1px solid #55bfa6; white-space: nowrap; }
.entry { width: 173px; background: #fffccc; padding: 2px; border-right: 2px solid #55bfa6; border-left: 2px solid #55bfa6; }
.entry input { width: 100%; height: 28px; border: 2px solid; border-color: #8f8d73 #d2cfa8 #d2cfa8 #8f8d73; padding: 0 0 8px 5px; font-size: 15px; }
.message { flex: 1; background: #fffccc; padding-left: 3px; line-height: 31px; }
.unit { position: relative; width: 77px; background: #55c9a9; padding: 2px; }
.unit select { appearance: none; width: 100%; height: 28px; border: 2px solid; border-color: #b9eddf #2f6f60 #2f6f60 #b9eddf; padding-left: 8px; font-size: 15px; }
.unit::after { content: ""; position: absolute; right: 9px; top: 13px; width: 12px; height: 6px; border: 2px solid; border-color: #b9eddf #2f6f60 #2f6f60 #b9eddf; }
.under-strip { flex: none; height: 9px; background: #c8fafa; border-top: 3px solid #5c7f7f; border-left: 2px solid #5c7f7f; }
```
